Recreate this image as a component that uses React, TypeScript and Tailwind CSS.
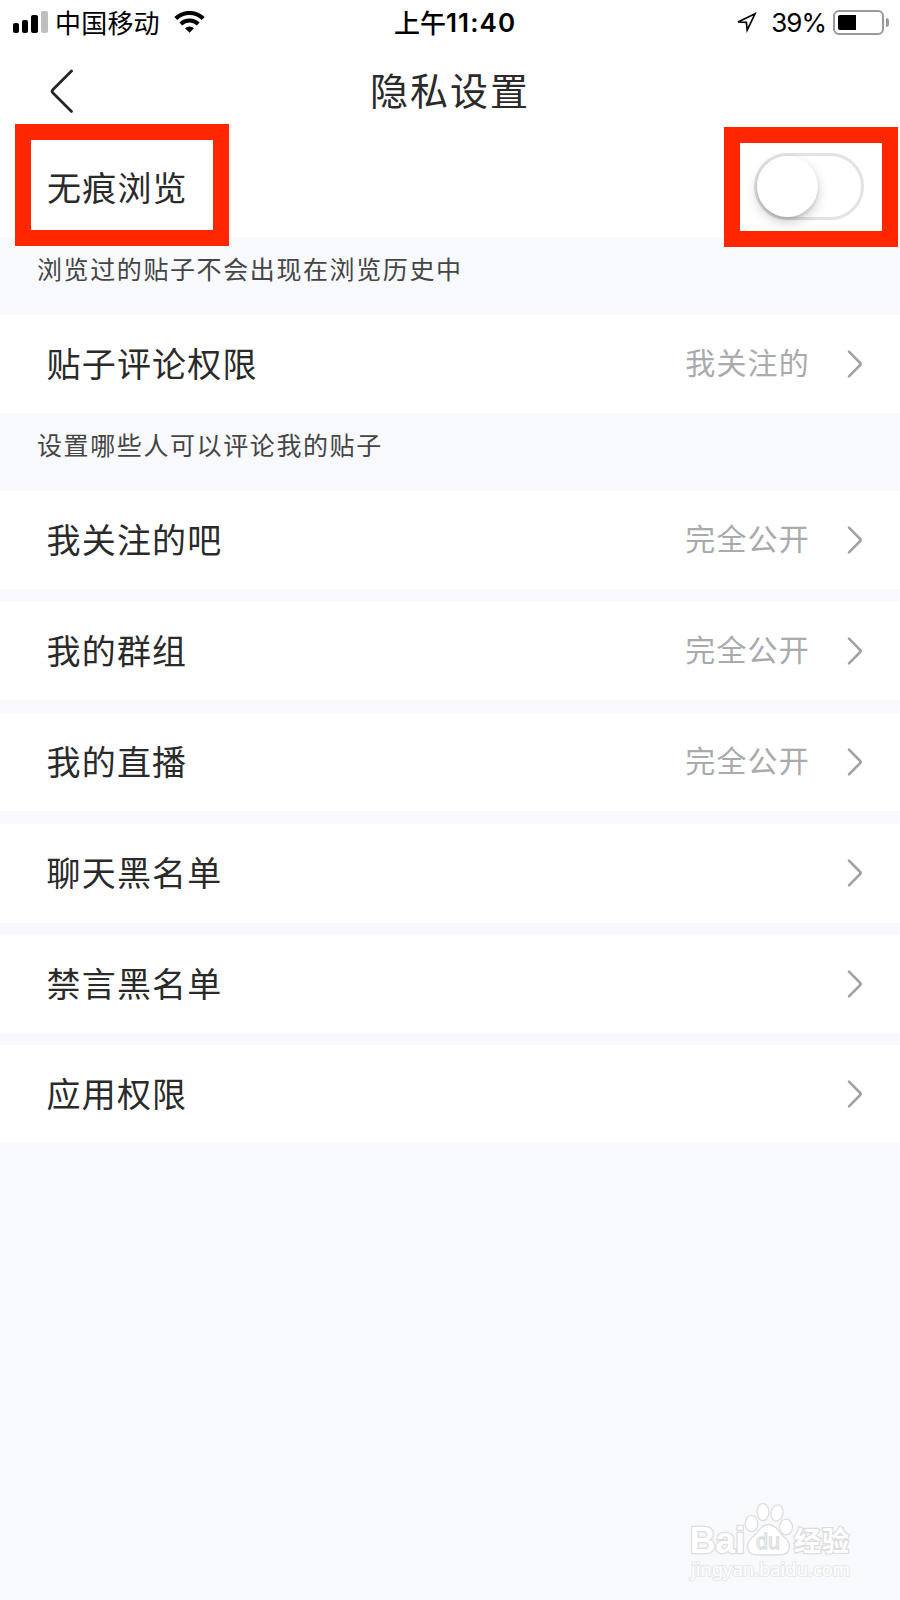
import type { ReactNode } from "react";

type Item = { label: string; value?: string; note?: string };

const ITEMS: Item[] = [
  { label: "贴子评论权限", value: "我关注的", note: "设置哪些人可以评论我的贴子" },
  { label: "我关注的吧", value: "完全公开" },
  { label: "我的群组", value: "完全公开" },
  { label: "我的直播", value: "完全公开" },
  { label: "聊天黑名单" },
  { label: "禁言黑名单" },
  { label: "应用权限" },
];

export default function App() {
  return (
    <div className="h-[1600px] w-[900px] overflow-hidden bg-[#f7f9fc] font-['Noto_Sans_CJK_SC',sans-serif] text-[#2a2a2a]">
      <div className="flex h-full flex-col">
        <StatusBar />
        <TitleBar />
        <div className="flex h-[111px] flex-none items-start justify-between bg-white">
          <div className="relative -mt-0.5 ml-[15px] flex h-[122px] w-[214px] items-center border-[16px] border-[#ff2600] pl-4 pt-[5px]">
            <Label>无痕浏览</Label>
          </div>
          <Toggle />
        </div>
        <Note>浏览过的贴子不会出现在浏览历史中</Note>
        <div className="flex flex-col gap-[12.9px]">
          {ITEMS.map((item) => (
            <Row key={item.label} item={item} />
          ))}
        </div>
        <Watermark />
      </div>
    </div>
  );
}

function StatusBar() {
  return (
    <div className="flex h-[46px] flex-none items-center bg-white text-black">
      <div className="flex w-[394px] items-center pl-[13px]">
        <div className="-mt-0.5 flex items-end gap-[3px]">
          <span className="h-2.5 w-1.5 rounded-[2px] bg-black" />
          <span className="h-[13px] w-1.5 rounded-[2px] bg-black" />
          <span className="h-[18px] w-[7px] rounded-[2px] bg-black" />
          <span className="h-[22px] w-[7px] rounded-[2px] bg-[#bfbfbf]" />
        </div>
        <span className="-mt-0.5 ml-[7px] text-[26px] leading-none tracking-[0.2px]">中国移动</span>
        <svg className="-mt-0.5 ml-[14px] h-[22px] w-[31px]" viewBox="0 0 31 22">
          <path d="M1.8 7.6a19.5 19.5 0 0 1 27.4 0" fill="none" stroke="#000" strokeWidth="4.2" />
          <path d="M6.8 13a12.3 12.3 0 0 1 17.4 0" fill="none" stroke="#000" strokeWidth="4" />
          <path d="M15.5 21.8 11 17.2a6.5 6.5 0 0 1 9 0z" />
        </svg>
      </div>
      <div className="flex items-center text-[26px] font-medium leading-none">
        <span className="-mt-0.5">上午</span>
        <span className="font-['Inter',sans-serif] text-[26px] font-semibold tracking-[1.1px]">11:40</span>
      </div>
      <div className="ml-auto flex items-center pr-[11px]">
        <svg className="-mt-0.5 h-[21px] w-[22px]" viewBox="0 0 22 21">
          <path d="M3 10 20 1.8 12.2 18l-.8-7.7z" fill="none" stroke="#000" strokeWidth="1.7" />
        </svg>
        <span className="ml-[14px] font-['Inter',sans-serif] text-[26px] leading-none tracking-[-1px]">39%</span>
        <div className="-mt-0.5 ml-[7px] h-[25px] w-[51px] rounded-[6px] border-2 border-[#999] p-[3px]">
          <div className="h-[15px] w-[18px] rounded-l-[2px] bg-black" />
        </div>
        <span className="-mt-0.5 ml-0.5 h-[9px] w-[3px] rounded-r-full bg-[#999]" />
      </div>
    </div>
  );
}

function TitleBar() {
  return (
    <div className="relative flex h-20 flex-none items-center justify-center bg-white">
      <svg className="absolute left-[50px] top-[23px] h-11 w-6" viewBox="0 0 24 44">
        <path d="M21.5 2 3 20.4q-1.8 1.8 0 3.6L21.5 42.5" fill="none" stroke="#262626" strokeWidth="2.8" strokeLinecap="round" />
      </svg>
      <h1 className="pt-1.5 text-[38px] leading-none tracking-[2px]">隐私设置</h1>
    </div>
  );
}

function Toggle() {
  return (
    <div className="relative mr-[2px] mt-px flex h-[120px] w-[174px] items-center justify-center border-[16px] border-[#ff2600] bg-white">
      <div className="-ml-1 -mt-0.5 h-[67px] w-[110px] rounded-full border-[3px] border-[#e3e3e3]">
        <div className="h-[61px] w-[61px] rounded-full bg-white shadow-[0_5px_12px_rgba(0,0,0,0.2),0_2px_3px_rgba(0,0,0,0.12)]" />
      </div>
    </div>
  );
}

function Label({ children }: { children: ReactNode }) {
  return <span className="-mt-0.5 text-[34px] leading-none tracking-[1.2px]">{children}</span>;
}

function Note({ children }: { children: ReactNode }) {
  return (
    <p className="h-[78px] flex-none pl-[37px] pt-[19px] text-[25px] leading-none tracking-[1.6px] text-[#454545]">{children}</p>
  );
}

function Row({ item }: { item: Item }) {
  return (
    <div className={item.note ? "-mb-[12.9px]" : ""}>
      <div className="flex h-[98px] items-center bg-white pl-[46.5px] pr-[37px]">
        <Label>{item.label}</Label>
        {item.value ? (
          <span className="-mt-1.5 ml-auto mr-[37px] text-[30px] leading-none tracking-[1.2px] text-[#a9aaac]">{item.value}</span>
        ) : null}
        <svg className={item.value ? "h-7 w-4" : "ml-auto h-7 w-4"} viewBox="0 0 16 28">
          <path d="M2 1.7 13.2 13Q14.2 14 13.2 15L2 26.3" fill="none" stroke="#a0a1a4" strokeWidth="2.5" strokeLinecap="round" />
        </svg>
      </div>
      {item.note ? <Note>{item.note}</Note> : null}
    </div>
  );
}

function Watermark() {
  return (
    <svg className="ml-auto mr-[40px] mt-auto mb-[15px] h-[86px] w-[176px] flex-none overflow-visible" viewBox="684 1499 176 86">
      <g fill="#fff" stroke="#dcdddf" strokeWidth="1.3">
        <g paintOrder="stroke" fontFamily="Liberation Sans" fontWeight="700">
          <text x="690" y="1553" fontSize="36" textLength="55" lengthAdjust="spacingAndGlyphs" strokeWidth="2.6">Bai</text>
          <text x="794" y="1551" fontSize="27" textLength="55" fontFamily="Noto Sans CJK SC" strokeWidth="2.6">经验</text>
        </g>
        <ellipse cx="751.5" cy="1523.5" rx="6.3" ry="8.2" />
        <ellipse cx="763" cy="1512" rx="6" ry="8.5" />
        <ellipse cx="777" cy="1513" rx="6" ry="8.2" transform="rotate(12 777 1513)" />
        <ellipse cx="786" cy="1527" rx="6.5" ry="7.8" />
        <path d="M768.5 1524.5c7 0 9 6 14 11 5 4 8 9 6.5 14-2 6-8 5.500-20.500 5.500s-18.500.5-20.500-5.500c-1.500-5 1.500-10 6.500-14 5-5 7-11 14-11z" />
        <text x="756" y="1549" fontSize="22" fontFamily="Liberation Sans" textLength="24" lengthAdjust="spacingAndGlyphs" strokeWidth="1.3">du</text>
        <text x="691" y="1576" fontSize="18" fontFamily="Noto Sans" textLength="159" lengthAdjust="spacingAndGlyphs" strokeWidth="2" paintOrder="stroke" stroke="#e6e8ea">jingyan.baidu.com</text>
      </g>
    </svg>
  );
}
